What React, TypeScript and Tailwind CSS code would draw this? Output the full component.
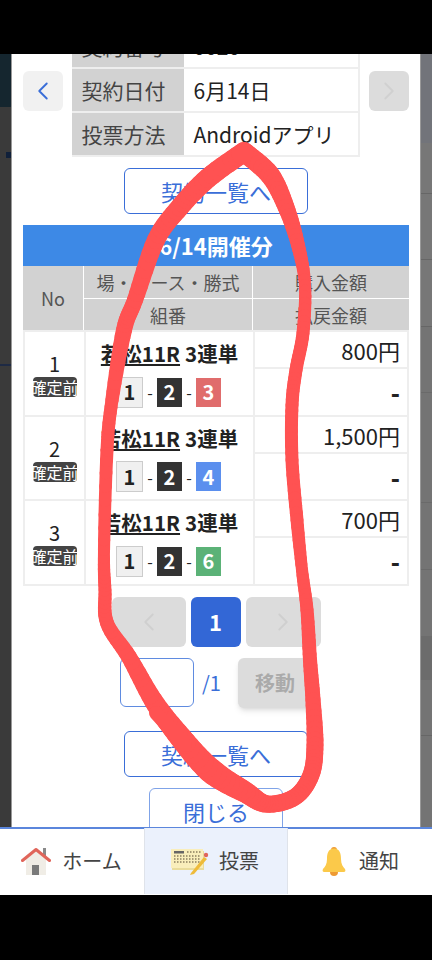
import React from "react";
import { ChevronLeft, ChevronRight } from "lucide-react";

const font = { fontFamily: '"Noto Sans CJK JP", "Noto Sans", sans-serif' };

const bets = [
  { no: 1, amount: "800円", last: 3, lastClass: "bg-[#e06c6c]" },
  { no: 2, amount: "1,500円", last: 4, lastClass: "bg-[#5b8fee]" },
  { no: 3, amount: "700円", last: 6, lastClass: "bg-[#5bb277]" },
];

// hand drawn marker line on top of the screenshot: x, y, width
const loop = [
  [244, 152, 20], [270, 175, 20], [286, 207, 17], [298, 245, 14], [305, 285, 12], [303, 333, 13],
  [296, 370, 13], [292, 405, 13], [292, 460, 13], [297, 520, 13], [302, 570, 12], [307, 610, 13],
  [310, 660, 14], [313, 700, 15], [315, 745, 17], [311, 775, 17], [295, 797, 17], [267, 804, 17],
  [245, 792, 21], [210, 770, 25], [177, 733, 22], [153, 700, 19], [129, 657, 16], [107, 623, 14],
  [105, 590, 13], [104, 550, 12], [107, 450, 13], [112, 400, 13], [124, 330, 16], [135, 300, 16],
  [156, 240, 18], [180, 207, 19], [208, 178, 20], [244, 152, 20],
];

const MarkerLoop = () => {
  const segs: number[][] = [];
  for (let i = 0; i < loop.length - 1; i++) {
    const p0 = loop[Math.max(i - 1, 0)];
    const p1 = loop[i];
    const p2 = loop[i + 1];
    const p3 = loop[Math.min(i + 2, loop.length - 1)];
    for (let s = 0; s < 8; s++) {
      const t = s / 8;
      const cr = (k: number) =>
        0.5 *
        (2 * p1[k] +
          (p2[k] - p0[k]) * t +
          (2 * p0[k] - 5 * p1[k] + 4 * p2[k] - p3[k]) * t * t +
          (3 * p1[k] - p0[k] - 3 * p2[k] + p3[k]) * t * t * t);
      segs.push([cr(0), cr(1), p1[2] + (p2[2] - p1[2]) * t]);
    }
  }
  segs.push(loop[0]);
  return (
    <svg className="absolute left-0 top-0 pointer-events-none" width="432" height="960" fill="none" stroke="#ff5252" strokeLinecap="round">
      {segs.slice(1).map((p, i) => (
        <line key={i} x1={segs[i][0]} y1={segs[i][1]} x2={p[0]} y2={p[1]} strokeWidth={p[2]} />
      ))}
      <line x1="156" y1="713" x2="185" y2="745" strokeWidth="14" />
    </svg>
  );
};

const OutlineButton = ({ label, className }: { label: string; className: string }) => (
  <div className={`border border-[#3a6ed8] rounded-md flex items-center justify-center text-[#3a6ed8] text-[22px] leading-none bg-white shrink-0 ${className}`}>
    {label}
  </div>
);

const ContractRow = ({ label, value, className = "h-[44px]" }: { label: string; value: string; className?: string }) => (
  <div className={`flex border-b-2 border-[#eeeeee] ${className}`}>
    <div className="w-[112px] bg-[#d2d2d2] text-[#444] text-[21px] leading-none pl-[10px] flex items-center">{label}</div>
    <div className="flex-1 ml-px border-r-2 border-[#eeeeee] text-[#222] text-[21px] leading-none pl-[9px] flex items-center">{value}</div>
  </div>
);

const BetRow = ({ no, amount, last, lastClass }: (typeof bets)[number]) => (
  <div className="grid grid-cols-[61px_169px_1fr] h-[84.5px] border-b-2 border-x-2 border-[#eeeeee]">
    <div className="flex flex-col items-center pt-[19px] border-r-2 border-[#eeeeee]">
      <div className="text-[#222] text-[20px] leading-[26px]">{no}</div>
      <div className="w-[44px] h-[20px] rounded bg-[#444444] text-white text-[16px] leading-[20px] overflow-hidden flex justify-center whitespace-nowrap">
        確定前
      </div>
    </div>
    <div className="flex flex-col items-center border-r-2 border-[#eeeeee]">
      <div className="text-[#222] text-[20.5px] leading-none mt-[11px] whitespace-nowrap">
        <span className="font-bold underline">若松11R</span>
        <span className="font-bold ml-[5px]">3連単</span>
      </div>
      <div className="flex items-center text-[#222] mt-[13px] h-[31px] -ml-[2px]">
        <div className="w-[27px] h-[31px] bg-[#f0f0f0] border border-[#cccccc] flex items-center justify-center font-bold text-[20px]">1</div>
        <span className="w-[14px] text-center text-[16px]">-</span>
        <div className="w-[25px] h-[29px] bg-[#333333] text-white flex items-center justify-center font-bold text-[20px]">2</div>
        <span className="w-[14px] text-center text-[16px]">-</span>
        <div className={`w-[25px] h-[29px] text-white flex items-center justify-center font-bold text-[20px] ${lastClass}`}>{last}</div>
      </div>
    </div>
    <div className="flex flex-col text-[#222]">
      <div className="h-[37px] border-b-2 border-[#eeeeee] text-right pr-[7px] text-[22px] leading-[36px]">{amount}</div>
      <div className="flex-1 text-right pr-[7px] font-black text-[24px] leading-[46px]">-</div>
    </div>
  </div>
);

const HomeIcon = () => (
  <svg width="30" height="30" viewBox="0 0 30 30">
    <rect x="22" y="2" width="3" height="9" fill="#8a8a8a" />
    <path d="M5 13 L15 5 L25 13 V29 H5 Z" fill="#f0ede6" />
    <rect x="11" y="19" width="7" height="10" fill="#7a7a7a" />
    <path d="M1.500 14.500 L15 3.500 L28.500 14.500" fill="none" stroke="#e0655a" strokeWidth="3" strokeLinecap="round" strokeLinejoin="round" />
  </svg>
);

const TicketIcon = () => (
  <svg width="38" height="28" viewBox="0 0 38 28">
    <rect x="1" y="4" width="32" height="19" fill="#e9dc9c" />
    <rect x="0" y="2" width="32" height="19" fill="#f9eebb" />
    <rect x="3" y="4" width="10" height="2.500" fill="#666" />
    <path d="M16 5h14M3 9h27M3 12h27M3 15h27" stroke="#8a7f60" strokeWidth="1.500" strokeDasharray="1.500 1.500" />
    <path d="M20 26 L33 10 L36 12 L23 27 L19 28 Z" fill="#eebb3a" />
    <circle cx="35" cy="8" r="2.200" fill="#e0655a" />
  </svg>
);

const BellIcon = () => (
  <svg width="24" height="30" viewBox="0 0 24 30">
    <path d="M9 4 a3 3 0 0 1 6 0z" fill="#ee9a33" />
    <path d="M8 26 a4 4 0 0 0 8 0z" fill="#ee9a33" />
    <path d="M12 2.500 C6 2.500 5 8 5 13 C5 18 3 21 1 23 C0 25 1 26 2 26 H22 C23 26 24 25 23 23 C21 21 19 18 19 13 C19 8 18 2.500 12 2.500Z" fill="#fbc94a" />
  </svg>
);

const Tab = ({ label, icon, className, gap }: { label: string; icon: React.ReactNode; className: string; gap: string }) => (
  <div className={`flex items-center justify-center text-[#444] text-[20px] leading-none -translate-y-px ${gap} ${className}`}>
    {icon}
    <span>{label}</span>
  </div>
);

export default function App() {
  return (
    <div className="relative w-[432px] h-[960px] bg-black overflow-hidden flex flex-col" style={font}>
      <div className="h-[54px] shrink-0" />

      <div className="flex h-[773px] shrink-0">
        {/* dimmed page behind the modal */}
        <div className="w-[11px] shrink-0 flex flex-col bg-[#3a3a3a]">
          <div className="h-[53px] bg-[#15262f]" />
          <div className="h-[45px]" />
          <div className="h-[6px] ml-[6px] bg-[#10203a]" />
          <div className="h-[206px]" />
          <div className="h-[2px] bg-[#1e2a44]" />
        </div>

        <div className="w-[410px] shrink-0 bg-white border-x border-[#999999] overflow-hidden px-[11px]">
          {/* contract info */}
          <div className="flex justify-between items-start -mt-[29px]">
            <div className="w-[40px] h-[40px] mt-[46px] rounded-md bg-[#f1f1f1] flex items-center justify-center">
              <ChevronLeft className="w-[30px] h-[30px] text-[#3a6ed8]" strokeWidth={1.5} />
            </div>
            <div className="w-[288px] -ml-px">
              <ContractRow label="契約番号" value="0020" />
              <ContractRow label="契約日付" value="6月14日" />
              <ContractRow label="投票方法" value="Androidアプリ" />
            </div>
            <div className="w-[40px] h-[40px] mt-[46px] rounded-md bg-[#dcdcdc] flex items-center justify-center">
              <ChevronRight className="w-[30px] h-[30px] text-[#d0d0d0]" strokeWidth={1.5} />
            </div>
          </div>

          <OutlineButton label="契約一覧へ" className="w-[184px] h-[46px] mx-auto mt-[11px]" />

          {/* bet list */}
          <div className="h-[41px] mt-[11px] bg-[#3d89e6] text-white font-bold text-[22px] leading-[41px] text-center">
            6/14開催分
          </div>
          <div className="grid grid-cols-[60px_168px_1fr] grid-rows-[32px_31px] gap-px bg-white text-[#555] text-[18px] leading-none border-b-2 border-[#eeeeee]">
            <div className="row-span-2 bg-[#d2d2d2] flex items-center justify-center">No</div>
            <div className="bg-[#d2d2d2] flex items-center justify-center">場・レース・勝式</div>
            <div className="bg-[#d2d2d2] flex items-center justify-center">購入金額</div>
            <div className="bg-[#d2d2d2] flex items-center justify-center">組番</div>
            <div className="bg-[#d2d2d2] flex items-center justify-center">払戻金額</div>
          </div>
          {bets.map((b) => (
            <BetRow key={b.no} {...b} />
          ))}

          {/* pagination */}
          <div className="flex justify-center gap-[5px] mt-[11px]">
            <div className="w-[74px] h-[50px] rounded-md bg-[#dcdcdc] flex items-center justify-center">
              <ChevronLeft className="w-[30px] h-[30px] text-[#cfcfcf]" strokeWidth={1.5} />
            </div>
            <div className="w-[50px] h-[50px] rounded-md bg-[#3367d6] text-white font-bold text-[22px] flex items-center justify-center">1</div>
            <div className="w-[75px] h-[50px] rounded-md bg-[#dcdcdc] flex items-center justify-center">
              <ChevronRight className="w-[30px] h-[30px] text-[#cfcfcf]" strokeWidth={1.5} />
            </div>
          </div>
          <div className="flex justify-center items-center mt-[11px]">
            <div className="w-[74px] h-[49px] rounded-md border border-[#5f8be0]" />
            <span className="ml-[8px] w-[19px] text-[#3a6ed8] text-[20px]">/1</span>
            <div className="ml-[17px] w-[74px] h-[50px] rounded-md bg-[#dcdcdc] shadow-md text-[#aaaaaa] font-bold text-[20px] flex items-center justify-center">移動</div>
          </div>

          <OutlineButton label="契約一覧へ" className="w-[184px] h-[46px] mx-auto mt-[23px]" />
          <OutlineButton label="閉じる" className="w-[134px] h-[46px] mx-auto mt-[11px] border-[#7fa3e8]" />
        </div>

        <div className="flex-1 flex flex-col bg-[#777777]">
          <div className="h-[89px] bg-[#72747a]" />
          <div className="h-[51px] border-b border-[#666666]" />
          <div className="h-[66px] border-b border-[#666666]" />
          <div className="h-[67px] border-b border-[#666666]" />
          <div className="h-[66px] border-b border-[#6a6a6a] bg-[#747474]" />
          <div className="h-[110px] border-b border-[#6a6a6a] bg-[#747474]" />
          <div className="h-[67px] border-b border-[#6a6a6a] bg-[#747474]" />
          <div className="h-[66px] bg-[#747474]" />
          <div className="h-[44px] bg-[#6c6c6c]" />
          <div className="h-[56px] border-b border-[#666666] bg-[#747474]" />
          <div className="flex-1 bg-[#747474]" />
        </div>
      </div>

      {/* bottom tabs */}
      <div className="h-[68px] shrink-0 grid grid-cols-3 bg-white border-t-2 border-[#5b86dc]">
        <Tab label="ホーム" icon={<HomeIcon />} gap="gap-[11px]" className="pr-[1px]" />
        <Tab label="投票" icon={<TicketIcon />} gap="gap-[10px]" className="bg-[#ebf1fc] border-x border-[#dfe3ea] pr-[2px]" />
        <Tab label="通知" icon={<BellIcon />} gap="gap-[13px]" className="pl-[1px]" />
      </div>
      <div className="flex-1" />

      <MarkerLoop />
    </div>
  );
}
